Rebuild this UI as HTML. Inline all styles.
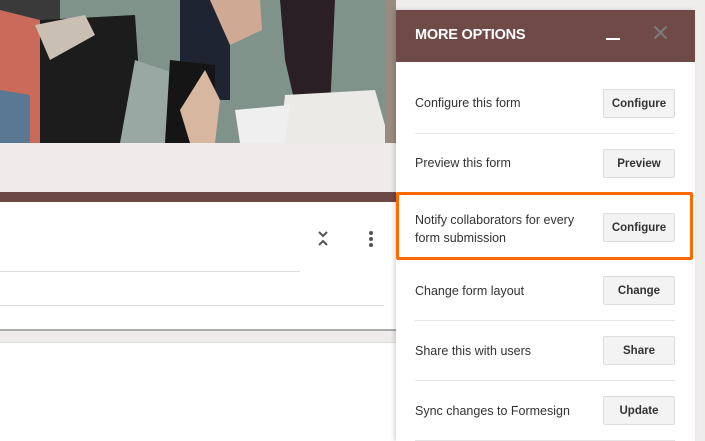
<!DOCTYPE html>
<html><head><meta charset="utf-8"><style>
*{margin:0;padding:0;box-sizing:border-box}
body{width:705px;height:441px;overflow:hidden;position:relative;background:#fff;font-family:"Liberation Sans",Arial,sans-serif}
.abs{position:absolute}
.row{position:absolute;left:415px;width:260px;font-size:12.5px;color:#333}
.btn{position:absolute;left:603px;width:72px;height:29px;background:#f3f3f3;border:1px solid #ddd;border-radius:2px;font-size:11.5px;font-weight:bold;color:#333;text-align:center;line-height:29px}
.sep{position:absolute;left:415px;width:260px;height:1px;background:#e5e5e5}
</style></head><body>
<svg class="abs" style="left:0;top:0" width="400" height="143" viewBox="0 0 400 143">
<rect width="400" height="143" fill="#7f938b"/>
<rect x="0" y="0" width="60" height="143" fill="#3a3a3a"/>
<path d="M0 10 L40 20 L50 90 L40 143 L0 143Z" fill="#c96a5a"/>
<path d="M0 90 L30 95 L30 143 L0 143Z" fill="#5a7893"/>
<path d="M40 20 L135 15 L140 90 L120 143 L40 143Z" fill="#1c1c1c"/>
<path d="M35 25 L85 15 L95 35 L50 60Z" fill="#c9bfb2"/>
<path d="M135 60 L180 75 L180 143 L120 143Z" fill="#9aa8a3"/>
<path d="M180 0 L230 0 L230 100 L180 100 Z" fill="#1f2433"/>
<path d="M170 60 L215 65 L215 143 L165 143Z" fill="#151515"/>
<path d="M205 70 L220 100 L215 143 L190 143 L180 110Z" fill="#d7b7a0"/>
<path d="M280 0 L335 0 L330 110 L300 125 L285 60Z" fill="#2a1f25"/>
<path d="M285 95 L375 90 L390 143 L280 143Z" fill="#eceae6"/>
<path d="M235 110 L290 105 L285 143 L240 143Z" fill="#efefef"/>
<path d="M210 0 L260 0 L262 30 L230 45Z" fill="#cfa994"/>
<rect x="385" y="0" width="15" height="143" fill="#9b8a80"/>
</svg>
<div class="abs" style="left:0;top:143px;width:400px;height:49px;background:#efebea"></div>
<div class="abs" style="left:0;top:192px;width:400px;height:10px;background:#6d4946"></div>
<div class="abs" style="left:0;top:202px;width:400px;height:127px;background:#fff"></div>
<div class="abs" style="left:0;top:271px;width:300px;height:1px;background:#ddd"></div>
<div class="abs" style="left:0;top:305px;width:384px;height:1px;background:#ddd"></div>
<div class="abs" style="left:0;top:329px;width:396px;height:2px;background:#aaa"></div>
<div class="abs" style="left:0;top:331px;width:396px;height:12px;background:#efebea;border-bottom:1px solid #ddd"></div>
<svg class="abs" style="left:316px;top:230px" width="14" height="18" viewBox="0 0 14 18"><path d="M3 2 L7 6 L11 2 M3 15 L7 11 L11 15" stroke="#555" stroke-width="2" fill="none"/></svg>
<div class="abs" style="left:369px;top:231px;width:4px;height:4px;border-radius:50%;background:#555;box-shadow:0 6px 0 #555,0 12px 0 #555"></div>
<div class="abs" style="left:396px;top:0;width:309px;height:441px;background:#efecec"></div>
<div class="abs" style="left:396px;top:10px;width:299px;height:431px;background:#fff;box-shadow:-2px 0 4px rgba(0,0,0,.15)"></div>
<div class="abs" style="left:396px;top:10px;width:299px;height:52px;background:#704a46"></div>
<div class="abs" style="left:415px;top:27px;color:#fff;font-size:14.5px;font-weight:bold;letter-spacing:-.2px">MORE OPTIONS</div>
<div class="abs" style="left:606px;top:38px;width:14px;height:2px;background:#fff"></div>
<svg class="abs" style="left:653px;top:25px" width="15" height="15" viewBox="0 0 15 15"><path d="M1.5 1.5L13.5 13.5M13.5 1.5L1.5 13.5" stroke="#7c7c80" stroke-width="2"/></svg>
<div class="row" style="top:96px">Configure this form</div><div class="btn" style="top:89px">Configure</div>
<div class="sep" style="top:133px"></div>
<div class="row" style="top:156px">Preview this form</div><div class="btn" style="top:149px">Preview</div>
<div class="abs" style="left:396px;top:192px;width:297px;height:68px;border:3px solid #ff6a00;border-radius:2px"></div>
<div class="row" style="top:211px;line-height:18px">Notify collaborators for every<br>form submission</div><div class="btn" style="top:213px">Configure</div>
<div class="row" style="top:284px">Change form layout</div><div class="btn" style="top:276px">Change</div>
<div class="sep" style="top:320px"></div>
<div class="row" style="top:344px">Share this with users</div><div class="btn" style="top:336px">Share</div>
<div class="sep" style="top:380px"></div>
<div class="row" style="top:404px">Sync changes to Formesign</div><div class="btn" style="top:396px">Update</div>
<div class="sep" style="top:440px"></div>
</body></html>
